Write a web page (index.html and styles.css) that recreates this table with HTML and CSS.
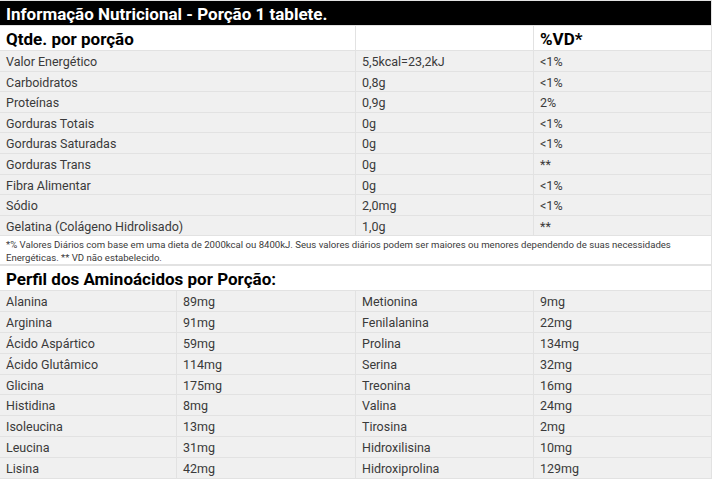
FILE: index.html
```html
<!DOCTYPE html>
<html lang="pt">
<head>
<meta charset="utf-8">
<link rel="stylesheet" href="styles.css">
</head>
<body>
<div class="label">
  <div class="title">Informação Nutricional - Porção 1 tablete.</div>
  <div class="grid3">
    <div class="cell head">Qtde. por porção</div>
    <div class="cell head"></div>
    <div class="cell head">%VD*</div>

    <div class="cell">Valor Energético</div><div class="cell">5,5kcal=23,2kJ</div><div class="cell">&lt;1%</div>
    <div class="cell">Carboidratos</div><div class="cell">0,8g</div><div class="cell">&lt;1%</div>
    <div class="cell">Proteínas</div><div class="cell">0,9g</div><div class="cell">2%</div>
    <div class="cell">Gorduras Totais</div><div class="cell">0g</div><div class="cell">&lt;1%</div>
    <div class="cell">Gorduras Saturadas</div><div class="cell">0g</div><div class="cell">&lt;1%</div>
    <div class="cell">Gorduras Trans</div><div class="cell">0g</div><div class="cell">**</div>
    <div class="cell">Fibra Alimentar</div><div class="cell">0g</div><div class="cell">&lt;1%</div>
    <div class="cell">Sódio</div><div class="cell">2,0mg</div><div class="cell">&lt;1%</div>
    <div class="cell">Gelatina (Colágeno Hidrolisado)</div><div class="cell">1,0g</div><div class="cell">**</div>
  </div>
  <div class="note">*% Valores Diários com base em uma dieta de 2000kcal ou 8400kJ. Seus valores diários podem ser maiores ou menores dependendo de suas necessidades Energéticas. ** VD não estabelecido.</div>
  <div class="subtitle">Perfil dos Aminoácidos por Porção:</div>
  <div class="grid4">
    <div class="cell">Alanina</div><div class="cell">89mg</div><div class="cell">Metionina</div><div class="cell">9mg</div>
    <div class="cell">Arginina</div><div class="cell">91mg</div><div class="cell">Fenilalanina</div><div class="cell">22mg</div>
    <div class="cell">Ácido Aspártico</div><div class="cell">59mg</div><div class="cell">Prolina</div><div class="cell">134mg</div>
    <div class="cell">Ácido Glutâmico</div><div class="cell">114mg</div><div class="cell">Serina</div><div class="cell">32mg</div>
    <div class="cell">Glicina</div><div class="cell">175mg</div><div class="cell">Treonina</div><div class="cell">16mg</div>
    <div class="cell">Histidina</div><div class="cell">8mg</div><div class="cell">Valina</div><div class="cell">24mg</div>
    <div class="cell">Isoleucina</div><div class="cell">13mg</div><div class="cell">Tirosina</div><div class="cell">2mg</div>
    <div class="cell">Leucina</div><div class="cell">31mg</div><div class="cell">Hidroxilisina</div><div class="cell">10mg</div>
    <div class="cell">Lisina</div><div class="cell">42mg</div><div class="cell">Hidroxiprolina</div><div class="cell">129mg</div>
  </div>
</div>
</body>
</html>
```

FILE: styles.css
```css
html, body {
  margin: 0;
  padding: 0;
  background: #ffffff;
}
.label {
  width: 711px;
  background: #e2e2e2;
  padding: 1px 1px 1px 0;
  display: flex;
  flex-direction: column;
  gap: 1px;
  font-family: Roboto, "Liberation Sans", sans-serif;
  color: #3a3a3a;
}
.title {
  height: 24px;
  background: #000000;
  color: #ffffff;
  font-weight: 700;
  font-size: 17px;
  line-height: 26px;
  padding-left: 6px;
  white-space: nowrap;
}
.grid3 {
  display: grid;
  grid-template-columns: 355px 177px 1fr;
  grid-template-rows: 24px;
  grid-auto-rows: 19.6px;
  gap: 1px;
}
.grid3 .head {
  height: 24px;
  background: #ffffff;
  color: #000000;
  font-weight: 700;
  font-size: 17px;
  line-height: 26px;
}
.grid4 {
  display: grid;
  grid-template-columns: 176px 178px 177px 1fr;
  grid-auto-rows: 19.8px;
  gap: 1px;
}
.cell {
  background: #f0f0f0;
  font-size: 12.5px;
  line-height: 21px;
  padding-left: 6px;
  white-space: nowrap;
  overflow: hidden;
}
.note {
  background: #ffffff;
  font-size: 9.6px;
  line-height: 12.5px;
  padding: 3px 20px 1px 6px;
  height: 24px;
  color: #3a3a3a;
}
.subtitle {
  height: 24px;
  background: #ffffff;
  color: #000000;
  font-weight: 700;
  font-size: 17px;
  line-height: 26px;
  padding-left: 6px;
  margin-top: 1px;
}
```
